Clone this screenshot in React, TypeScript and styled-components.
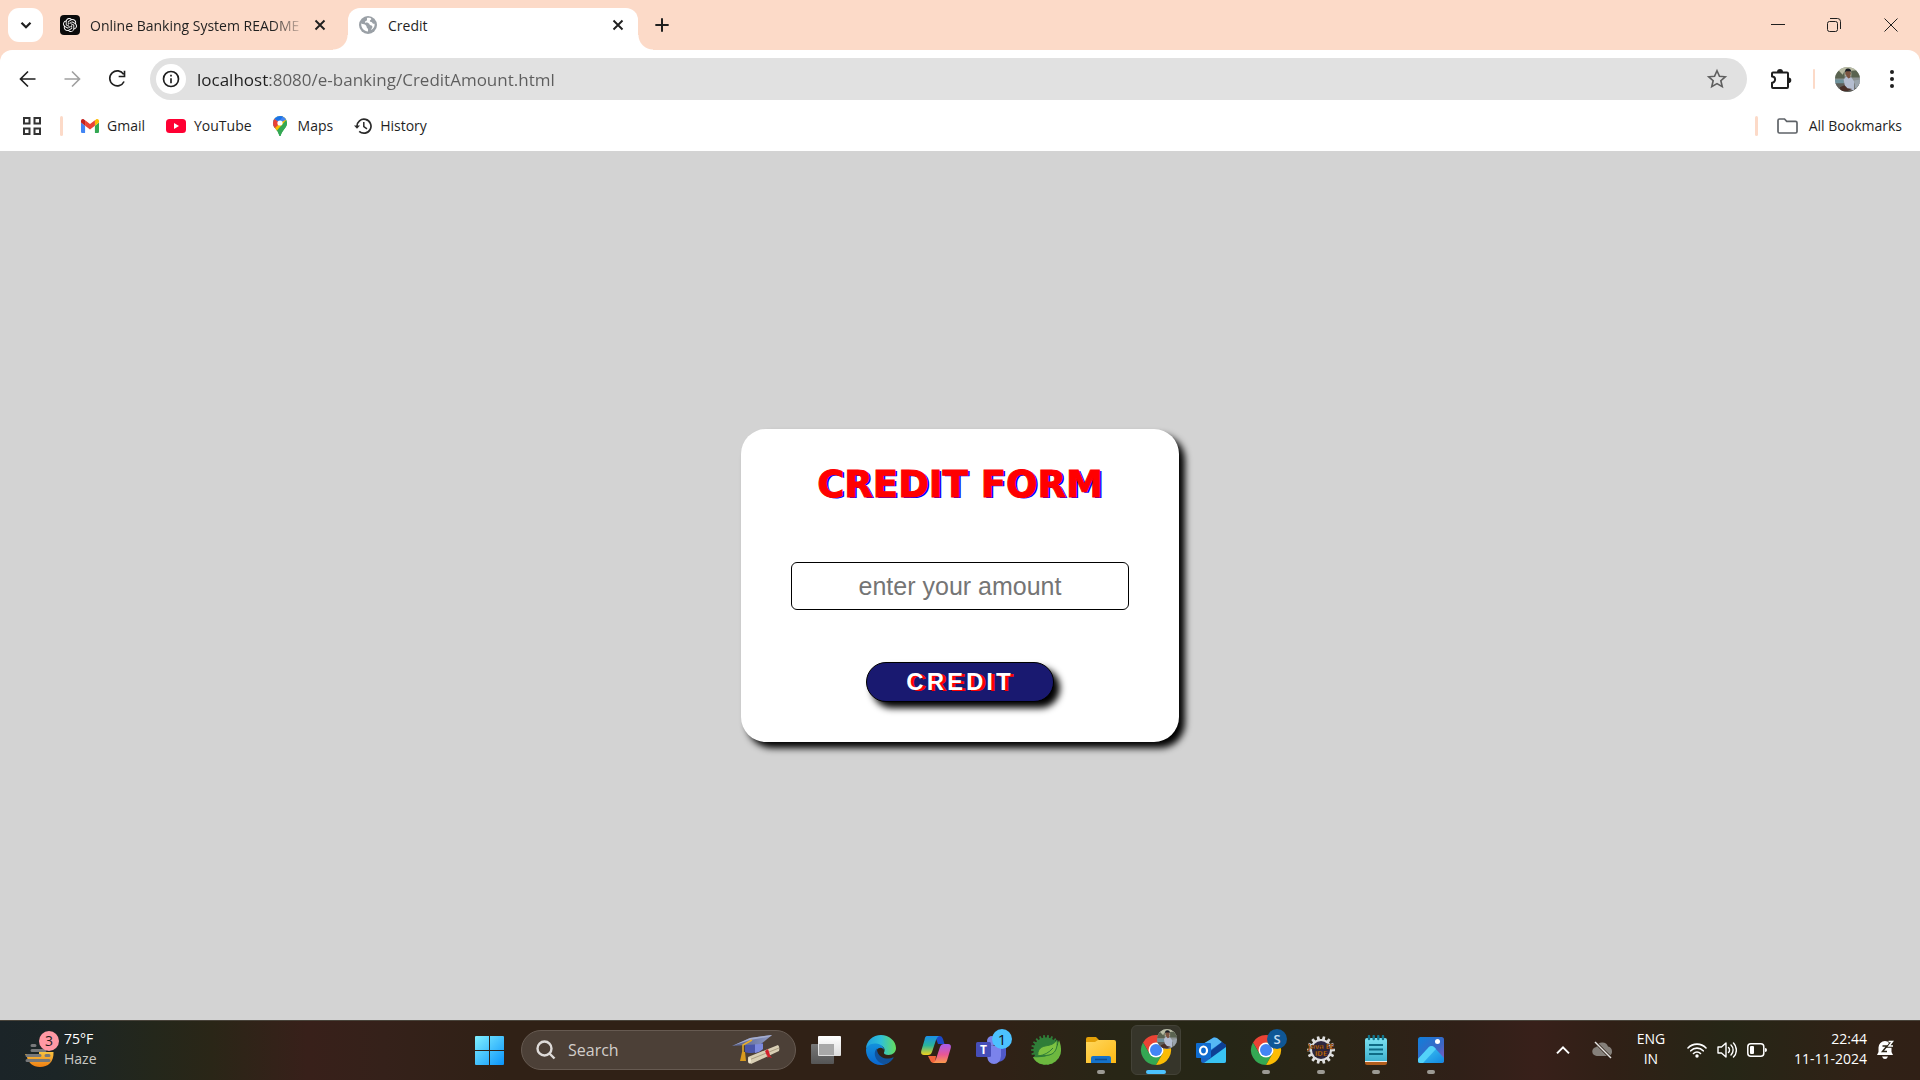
import React, { useState } from "react";
import styled, { createGlobalStyle } from "styled-components";

const ui = `"Open Sans", "Noto Sans", sans-serif`;

const GlobalStyle = createGlobalStyle`
  *, *::before, *::after { box-sizing: border-box; }
  html, body, #root { height: 100%; }
  body { margin: 0; overflow: hidden; background: #d3d3d3; font-family: ${ui}; color: #1f1f1f; }
  button, input { font-family: inherit; }
  svg { display: block; flex: none; }
`;

const Screen = styled.div`
  min-height: 100vh;
  display: flex;
  flex-direction: column;
`;

/* ---------- browser chrome ---------- */

const TabStrip = styled.header`
  height: 50px;
  display: flex;
  align-items: flex-start;
  background: #fcdac8;
  padding: 8px 0 0 8px;
`;

const PlainButton = styled.button<{ $w?: number; $h?: number; $tone?: string }>`
  width: ${(p) => p.$w ?? 28}px;
  height: ${(p) => p.$h ?? 28}px;
  display: flex;
  align-items: center;
  justify-content: center;
  flex: none;
  padding: 0;
  border: 0;
  background: none;
  color: ${(p) => p.$tone ?? "#1f1f1f"};
`;

const TabSearch = styled(PlainButton)`
  background: #fff;
  border-radius: 11px;
`;

const Tabs = styled.div`
  display: flex;
  flex: 1;
  padding-left: 5px;
`;

const Tab = styled.div<{ $active?: boolean }>`
  position: relative;
  width: ${(p) => (p.$active ? 290 : 300)}px;
  height: 42px;
  display: flex;
  align-items: flex-start;
  padding: ${(p) => (p.$active ? "0 6px 0 10px" : "0 14px 0 12px")};
  border-radius: 12px 12px 0 0;
  background: ${(p) => (p.$active ? "#fff" : "none")};

  &::before,
  &::after {
    content: "";
    display: ${(p) => (p.$active ? "block" : "none")};
    position: absolute;
    bottom: 0;
    width: 15px;
    height: 15px;
  }
  &::before { right: 100%; background: radial-gradient(circle at 0 0, transparent 14px, #fff 15px); }
  &::after { left: 100%; background: radial-gradient(circle at 100% 0, transparent 14px, #fff 15px); }
`;

const TabLabel = styled.span<{ $fade?: boolean }>`
  flex: 1;
  min-width: 0;
  overflow: hidden;
  white-space: nowrap;
  padding-left: 10px;
  line-height: 35px;
  font-size: 14px;
  ${(p) => p.$fade && "mask-image: linear-gradient(90deg, #000 calc(100% - 34px), transparent);"}
`;

const TabIcon = styled.span`
  height: 34px;
  display: flex;
  align-items: center;
`;

const TabClose = styled(PlainButton)`
  width: 28px;
  height: 34px;
`;

const WindowControls = styled.div`
  display: flex;
`;

const ToolbarBack = styled.div`
  background: #fcdac8;
`;

const Toolbar = styled.nav`
  height: 58px;
  display: flex;
  align-items: center;
  padding: 0 14px 0 6px;
  background: #fff;
  border-radius: 12px 12px 0 0;
`;

const AddressBar = styled.div`
  flex: 1;
  height: 42px;
  display: flex;
  align-items: center;
  margin: 0 16px 0 10px;
  padding: 0 16px 0 6px;
  border-radius: 21px;
  background: #e1e1e1;
`;

const SiteInfo = styled(PlainButton)`
  border-radius: 50%;
  background: #fff;
`;

const Url = styled.input`
  flex: 1;
  min-width: 0;
  height: 30px;
  padding: 0;
  margin-left: 11px;
  border: 0;
  outline: 0;
  font-size: 17px;
  color: transparent;
  background: linear-gradient(90deg, #1f1f1f 72px, #5d5d5d 72px);
  background-clip: text;
  -webkit-background-clip: text;
`;

const Divider = styled.span<{ $w: number; $margin: string }>`
  width: ${(p) => p.$w}px;
  height: 20px;
  margin: ${(p) => p.$margin};
  border-radius: 2px;
  background: #fcdac8;
`;

const MenuButton = styled(PlainButton)`
  margin-left: 18px;
`;

const Bookmarks = styled.nav`
  height: 43px;
  display: flex;
  align-items: center;
  padding: 0 18px 7px 18px;
  background: #fff;
`;

const BookmarkList = styled.div`
  flex: 1;
  display: flex;
  align-items: center;
  gap: 21px;
  padding-left: 18px;
`;

const Bookmark = styled.a<{ $gap?: number }>`
  display: flex;
  align-items: center;
  gap: ${(p) => p.$gap ?? 8}px;
  color: #1f1f1f;
  font-size: 14px;
  line-height: 20px;
  text-decoration: none;
  white-space: nowrap;
`;

/* ---------- page ---------- */

const Page = styled.main`
  flex: 1;
  display: flex;
  align-items: center;
  justify-content: center;
  background: #d3d3d3;
`;

const CreditCard = styled.form`
  display: flex;
  flex-direction: column;
  align-items: center;
  padding: 30px 50px 40px;
  border-radius: 25px;
  background: #fff;
  box-shadow: 6px 6px 7px #000;
`;

const Title = styled.h1`
  margin: 0 0 52px;
  font-family: "Arial Black", "DejaVu Sans", sans-serif;
  font-size: 37px;
  font-weight: 900;
  line-height: 51px;
  color: #f00;
  -webkit-text-stroke: 1px #f00;
  text-shadow: 2px 1px 0 #00f;
  white-space: nowrap;
`;

const Amount = styled.input`
  width: 338px;
  height: 48px;
  border: 1px solid #000;
  border-radius: 6px;
  padding: 0 10px;
  text-align: center;
  font-family: "Liberation Sans", Arial, sans-serif;
  font-size: 25px;
  color: #000;
  outline: 0;
  &::placeholder { color: #757575; }
`;

const Submit = styled.button`
  width: 188px;
  height: 40px;
  margin-top: 52px;
  border: 1px solid #000;
  border-radius: 20px;
  background: #191970;
  color: #fff;
  font-family: "Liberation Sans", Arial, sans-serif;
  font-size: 24px;
  font-weight: 700;
  letter-spacing: 3px;
  text-shadow: 3px 1px 0 #f00;
  box-shadow: 6px 6px 7px #000;
`;

/* ---------- taskbar ---------- */

const Taskbar = styled.footer`
  height: 60px;
  display: grid;
  grid-template-columns: 1fr auto 1fr;
  padding-bottom: 1px;
  border-top: 1px solid #48433a;
  color: #fff;
  background: linear-gradient(90deg, #1b2428 0, #1c2526 3%, #24271b 8%, #2a2617 11%, #38201a 16%, #35211a 20%, #302116 26%, #302116 52%, #282616 58%, #262616 64%, #2b2416 70%, #302018 76%, #38201a 80%, #302016 84%, #262616 90%, #302116 97%, #302016 100%);
`;

const Weather = styled.button`
  justify-self: start;
  display: flex;
  align-items: center;
  gap: 5px;
  padding: 0 0 0 23px;
  border: 0;
  background: none;
  color: #fff;
  text-align: left;
`;

const Stack = styled.span<{ $align?: string }>`
  display: flex;
  flex-direction: column;
  padding-bottom: 2px;
  text-align: ${(p) => p.$align ?? "left"};
  font-size: 14px;
  line-height: 20px;
  white-space: nowrap;
`;

const Muted = styled.span`
  color: #c9c9c4;
`;

const Pinned = styled.div`
  display: flex;
  align-items: center;
  gap: 5px;
`;

const AppButton = styled.button<{ $active?: boolean }>`
  width: 50px;
  height: 50px;
  padding: 0;
  position: relative;
  display: flex;
  align-items: center;
  justify-content: center;
  border-radius: 6px;
  border: 1px solid ${(p) => (p.$active ? "#434237" : "transparent")};
  background: ${(p) => (p.$active ? "#36352a" : "none")};
`;

const RunMark = styled.span<{ $active?: boolean }>`
  position: absolute;
  bottom: 0;
  width: ${(p) => (p.$active ? 20 : 8)}px;
  height: 4px;
  border-radius: 2px;
  background: ${(p) => (p.$active ? "#4cc2ff" : "#9c9a94")};
`;

const Search = styled.label`
  width: 275px;
  height: 40px;
  margin: 0 0 0 2px;
  display: flex;
  align-items: center;
  padding: 0 15px 0 14px;
  border: 1px solid #665a51;
  border-radius: 20px;
  background: #4c4037;
`;

const SearchInput = styled.input`
  flex: 1;
  min-width: 0;
  margin-left: 12px;
  padding: 0;
  border: 0;
  outline: 0;
  background: none;
  color: #fff;
  font-size: 16px;
  &::placeholder { color: #d2cecb; opacity: 1; }
`;

const Tray = styled.div`
  justify-self: end;
  display: flex;
  align-items: center;
  padding-right: 26px;
`;

const TrayButton = styled.button<{ $w?: number }>`
  min-width: ${(p) => p.$w ?? 40}px;
  height: 50px;
  display: flex;
  align-items: center;
  justify-content: center;
  gap: 10px;
  padding: 0;
  border: 0;
  background: none;
  color: #fff;
`;

const ClockButton = styled(TrayButton)`
  margin-left: 19px;
  gap: 10px;
`;

/* ---------- drawings ---------- */

const Line = ({ size, d, w = 2, box = 24 }: { size: number; d: string; w?: number; box?: number }) => (
  <svg width={size} height={size} viewBox={`0 0 ${box} ${box}`} fill="none" stroke="currentColor" strokeWidth={w} aria-hidden="true">
    <path d={d} />
  </svg>
);

const gearPath = (teeth: number, c: number, inner: number, outer: number) => {
  const pts: string[] = [];
  const step = (Math.PI * 2) / teeth;
  for (let i = 0; i < teeth; i++) {
    [[-0.3, inner], [-0.2, outer], [0.2, outer], [0.3, inner]].forEach(([o, r]) => {
      const a = (i + o) * step;
      pts.push(`${(c + r * Math.cos(a)).toFixed(2)} ${(c + r * Math.sin(a)).toFixed(2)}`);
    });
  }
  return `M${pts.join("L")}Z`;
};

const OpenAiIcon = () => (
  <svg width="20" height="20" viewBox="0 0 20 20" aria-hidden="true">
    <rect width="20" height="20" rx="4" fill="#0b0b0b" />
    <g transform="translate(3 3) scale(.583)" fill="#fff">
      <path d="M22.28 9.82a5.98 5.98 0 0 0-.52-4.91 6.05 6.05 0 0 0-6.51-2.9A6.07 6.07 0 0 0 4.98 4.18a5.98 5.98 0 0 0-4 2.9 6.05 6.05 0 0 0 .74 7.1 5.98 5.98 0 0 0 .51 4.91 6.05 6.05 0 0 0 6.52 2.9A5.98 5.98 0 0 0 13.26 24a6.06 6.06 0 0 0 5.77-4.21 5.99 5.99 0 0 0 4-2.9 6.06 6.06 0 0 0-.75-7.07zm-9.02 12.61a4.48 4.48 0 0 1-2.88-1.04l.14-.08 4.78-2.76a.79.79 0 0 0 .39-.68v-6.74l2.02 1.17.04.05v5.58a4.5 4.5 0 0 1-4.49 4.5zM3.6 18.3a4.47 4.47 0 0 1-.54-3.01l.14.08 4.79 2.76a.77.77 0 0 0 .78 0l5.84-3.37v2.33l-.03.06L9.74 19.95a4.5 4.5 0 0 1-6.14-1.65zM2.34 7.9a4.49 4.49 0 0 1 2.37-1.98v5.68c0 .28.15.54.39.68l5.81 3.35-2.02 1.17h-.07l-4.83-2.79A4.5 4.5 0 0 1 2.34 7.87zm16.6 3.86-5.84-3.39 2.02-1.16h.07l4.83 2.79a4.49 4.49 0 0 1-.68 8.1v-5.68a.79.79 0 0 0-.4-.66zm2.01-3.03-.14-.08-4.77-2.78a.78.78 0 0 0-.79 0L9.41 9.23V6.9l.03-.06 4.83-2.79a4.5 4.5 0 0 1 6.68 4.66zM8.31 12.86l-2.02-1.16-.04-.06V6.07a4.5 4.5 0 0 1 7.38-3.45l-.14.08L8.7 5.46a.79.79 0 0 0-.39.68zm1.1-2.36L12 9l2.61 1.5v3L12.01 15l-2.6-1.5z" />
    </g>
  </svg>
);

const GlobeIcon = () => (
  <svg width="20" height="20" viewBox="0 0 20 20" aria-hidden="true">
    <circle cx="10" cy="10" r="9" fill="#9aa0a6" />
    <path d="M3.2 8.6c1.7.8 4.2.8 5 2.1.7 1 .2 1.8 1.2 2.5.8.6.7 1.6.6 3.4-3.8-.2-7-3.400-6.800-8z M9.300 2.800c-1 1.300.4 1.700-.6 2.700-.8.8-2 .7-1.700 1.800.4 1 2.400.2 3.600.9 1.200.6.8 1.800 2 2.100 1.300.3 2.300.8 1.600 2.400-.3.8-.9 1.200-1.200 2.200 2.400-1.300 3.900-3 3.600-6.200-1.500.4-1.900-.3-2.500-1.200-.7-1-2.300-.2-2.300-1.500 0-1.500 1.500-1 1.500-2.100 0-.8-2.400-1.500-4-1.100z" fill="#fff" />
  </svg>
);

const GmailIcon = () => (
  <svg width="18" height="14" viewBox="52 42 88 66" preserveAspectRatio="none" aria-hidden="true">
    <path fill="#4285f4" d="M58 108h14V74L52 59v43c0 3.320 2.690 6 6 6" />
    <path fill="#34a853" d="M120 108h14c3.320 0 6-2.690 6-6V59l-20 15" />
    <path fill="#fbbc04" d="M120 48v26l20-15v-8c0-7.420-8.470-11.650-14.400-7.200" />
    <path fill="#ea4335" d="M72 74V48l24 18 24-18v26L96 92" />
    <path fill="#c5221f" d="M52 51v8l20 15V48l-5.600-4.200c-5.940-4.450-14.400-.22-14.400 7.200" />
  </svg>
);

const YouTubeIcon = () => (
  <svg width="20" height="14" viewBox="0 0 20 14" aria-hidden="true">
    <rect width="20" height="14" rx="3.500" fill="#ff0033" />
    <path d="M8 4.100v5.800L13 7z" fill="#fff" />
  </svg>
);

const MapsIcon = () => (
  <svg width="14" height="20" viewBox="0 0 14 20" aria-hidden="true">
    <defs>
      <clipPath id="pin"><path d="M7 0a7 7 0 0 1 7 7c0 3-1.600 4.500-3.400 7C9 16.200 8.400 17.200 7.700 19.400q-.7 1.200-1.400 0C5.600 17.200 5 16.200 3.400 14 1.600 11.500 0 10 0 7a7 7 0 0 1 7-7z" /></clipPath>
    </defs>
    <g clipPath="url(#pin)">
      <rect width="14" height="20" fill="#34a853" />
      <path d="M14 3 0 19V9l9-9h5z" fill="#fbbc04" />
      <path d="M14 3.500v16.500H2.500L8 12z" fill="#34a853" />
      <path d="M0 0h14v3L7 7 0 13z" fill="#4285f4" />
      <path d="M0 2 7 7 1 13H0z" fill="#ea4335" />
      <path d="M7 0h3L7 4.500 4 4.500 1.500 2.500z" fill="#1a73e8" />
    </g>
    <circle cx="7" cy="7" r="2.600" fill="#fff" />
  </svg>
);

const HistoryIcon = () => (
  <svg width="18" height="18" viewBox="0 0 18 18" fill="none" stroke="#2a2a2a" strokeWidth="1.700" aria-hidden="true">
    <path d="M3 9.500A7 7 0 1 1 5.200 14.300" />
    <path d="M9.800 5v4.600l3.200 2.200" strokeWidth="1.500" />
    <path d="M0 8.500h6L3 11.700z" fill="#2a2a2a" stroke="none" />
  </svg>
);

const AppsIcon = () => (
  <svg width="18" height="18" viewBox="0 0 18 18" fill="none" stroke="#333" strokeWidth="2" aria-hidden="true">
    <path d="M1 1h5.500v5.500H1zM11.500 1H17v5.500h-5.500zM1 11.500h5.500V17H1zM11.500 11.500H17V17h-5.500z" />
  </svg>
);

const PuzzleIcon = () => (
  <svg width="22" height="22" viewBox="0 0 22 22" aria-hidden="true">
    <path d="M3 4.500h4.500M3 4.500 Q2 4.500 2 5.500V8.500a3 3 0 0 1 0 6.200V19q0 1 1 1h14q1 0 1-1V5.500q0-1-1-1z" fill="none" stroke="#1f1f1f" strokeWidth="2" strokeLinejoin="round" />
    <path d="M7 4a3 3 0 0 1 6 0zM18.500 9.500a2.800 2.800 0 0 1 0 5.600z" fill="#1f1f1f" />
  </svg>
);

const Photo = ({ id, size }: { id: string; size: number }) => (
  <svg width={size} height={size} viewBox="0 0 26 26" aria-hidden="true">
    <clipPath id={id}><circle cx="13" cy="13" r="13" /></clipPath>
    <g clipPath={`url(#${id})`}>
      <rect width="26" height="26" fill="#8c9293" />
      <path d="M0 0h26v9H0z" fill="#b9bca4" />
      <path d="M0 6l4-2 4 4 2-4v8H0zM17 4l9-1v8h-9z" fill="#5a6350" />
      <path d="M0 13h9v5H0z" fill="#6e929c" />
      <path d="M0 17h26v9H0z" fill="#5f5f5a" />
      <path d="M9 13l3-3 5 1 3 4v9h-9z" fill="#b4bdd0" />
      <path d="M20 14l6-1v9h-5z" fill="#9aa4ac" />
      <path d="M12 6h4v5l-2 1-2-2z" fill="#7b5441" />
      <circle cx="13.500" cy="6.500" r="2.800" fill="#7b5441" />
      <path d="M10.500 6q-.5-4.500 3-4.500T17 6l-1-1.500h-4.500z" fill="#171a22" />
      <path d="M5 21l5-2 3 3 5 1-5 2H6z" fill="#493029" />
    </g>
  </svg>
);

const FolderOutline = () => (
  <svg width="21" height="16" viewBox="0 0 21 16" fill="none" stroke="#5f6368" strokeWidth="1.700" aria-hidden="true">
    <path d="M2.500 1h5l2.200 2.300h8.800q1.500 0 1.500 1.500v8.700q0 1.500-1.500 1.500h-16Q1 15 1 13.500v-11Q1 1 2.500 1z" />
  </svg>
);

const HazeIcon = () => (
  <svg width="36" height="42" viewBox="0 -2 36 42" aria-hidden="true">
    <defs><linearGradient id="sun" x2="0" y2="1"><stop stopColor="#f9c440" /><stop offset="1" stopColor="#f07f12" /></linearGradient></defs>
    <path d="M2 23h14v-2h14.500C31 31 25 36 17 36 10 36 4.500 31 4 26z" fill="url(#sun)" />
    <g stroke="#77787a" strokeWidth="3" strokeLinecap="round"><path d="M9 14.500h3M9 19.500h13M4 24.500h13M23 24.500h3M4 29.500h22" /></g>
    <circle cx="26" cy="10" r="10" fill="#ff99a4" />
    <text x="26" y="15" textAnchor="middle" fontSize="14" fill="#1d1d1d">3</text>
  </svg>
);

const StartIcon = () => (
  <svg width="29" height="29" viewBox="0 0 29 29" aria-hidden="true">
    <defs><linearGradient id="win" x2="1" y2="1" gradientUnits="userSpaceOnUse" gradientTransform="scale(29)"><stop stopColor="#80f0ff" /><stop offset="1" stopColor="#0a94fb" /></linearGradient></defs>
    <path d="M1 0h13v14H0V1q0-1 1-1zM15 0h13q1 0 1 1v13H15zM0 15h14v14H1q-1 0-1-1zM15 15h14v13q0 1-1 1H15z" fill="url(#win)" />
  </svg>
);

const MagnifierIcon = () => (
  <svg width="20" height="20" viewBox="0 0 20 20" fill="none" stroke="#dedbd9" strokeWidth="2.400" aria-hidden="true">
    <circle cx="8.500" cy="8.500" r="7" /><path d="M13.500 13.500 18.500 18.500" />
  </svg>
);

const GraduationArt = () => (
  <svg width="48" height="30" viewBox="0 0 48 30" aria-hidden="true">
    <defs>
      <linearGradient id="board" x2="1" y2="0"><stop stopColor="#525c88" /><stop offset="1" stopColor="#8f9ac4" /></linearGradient>
    </defs>
    <path d="M13 8l18 0v6c-4 4-14 5-18 3z" fill="#4a55a8" />
    <path d="M23 9h8v5q-3 3-8 4z" fill="#7c89dd" />
    <path d="M0 11 18 3 40 0 29 9z" fill="url(#board)" />
    <path d="M0 11 18 3 40 0 38 1.500 18 5z" fill="#a5adce" />
    <path d="M20 5 11 10v10" stroke="#e9ae27" strokeWidth="1.500" fill="none" />
    <path d="M10 17h3l1 9H8z" fill="#d99a1d" />
    <path d="M16 22 46 10q2 2 1 6L19 29q-3-2-3-7z" fill="#d9cfb4" />
    <path d="M17 25 47 13" stroke="#a99d81" />
    <ellipse cx="17.500" cy="25.500" rx="1.500" ry="3" fill="#f0e8cf" />
    <path d="M33 16l3-2 2 6-3 1zM37 19l3 4-3-1-2 1z" fill="#d3202a" />
  </svg>
);

const TaskViewIcon = () => (
  <svg width="30" height="28" viewBox="0 0 30 28" aria-hidden="true">
    <defs>
      <linearGradient id="tv" x2="0" y2="1"><stop stopColor="#fff" /><stop offset="1" stopColor="#dcdcdc" /></linearGradient>
      <linearGradient id="tv2" x2="0" y2="1"><stop stopColor="#777" /><stop offset="1" stopColor="#555" /></linearGradient>
    </defs>
    <rect y="8" width="23" height="20" rx="1" fill="url(#tv2)" />
    <rect x="7" width="23" height="20" rx="1" fill="url(#tv)" />
    <path d="M8 8h15v11H8z" fill="#a8a8a8" />
  </svg>
);

const EdgeIcon = () => (
  <svg width="30" height="30" viewBox="0 0 30 30" aria-hidden="true">
    <defs>
      <linearGradient id="e1" x2="1"><stop stopColor="#1f9fe0" /><stop offset=".5" stopColor="#2fc0d8" /><stop offset="1" stopColor="#65dd5c" /></linearGradient>
      <linearGradient id="e2" x2="0" y2="1"><stop stopColor="#1391dc" /><stop offset="1" stopColor="#0a66d0" /></linearGradient>
    </defs>
    <path d="M0 14C0 6 7 0 15 0s15 6 15 13c0 4-3 7-7.500 7-3 0-5-1-4.500-2.500C20 14 17 10 12 10 6 10 0 12 0 14z" fill="url(#e1)" />
    <path d="M0 15c0-4 5-7 10-6.500 5 .5 8 3 8 7 0-2-3-4-6-2-3 2.500-2 8 1 10.500s8 3 12 1C22 29 18 30 15 30 6 30 0 23 0 15z" fill="url(#e2)" />
    <path d="M11 13.500C8 16 8 21 11 25c3 3.500 7 4.500 9 4 3.500-1 6-3.500 7.500-6 .3-.6-.3-.8-.8-.5-3 1.500-8 1.500-11-.5-3-1.800-5-5-4.700-8.500z" fill="#10529c" />
  </svg>
);

const CopilotIcon = () => (
  <svg width="30" height="28" viewBox="0 0 30 28" aria-hidden="true">
    <defs>
      <linearGradient id="c1" x2="0" y2="1"><stop stopColor="#1a8fe8" /><stop offset=".5" stopColor="#2bb59a" /><stop offset="1" stopColor="#f2d21c" /></linearGradient>
      <linearGradient id="c2" x2="0" y2="1"><stop stopColor="#a55cf0" /><stop offset=".55" stopColor="#e85696" /><stop offset="1" stopColor="#fb9a4b" /></linearGradient>
    </defs>
    <path d="M14 0h5q2 0 3 3l1.500 5H17z" fill="#1c49c8" />
    <path d="M7 20h8l-1 7h-2q-2 0-3-3z" fill="#f2643c" />
    <path d="M6 0h12q-2 1-3 4l-4 12q-1 3-4 3H3q-4 0-2.500-5l3-10Q4 0 6 0z" fill="url(#c1)" />
    <path d="M24 27H12q2-1 3-4l4-12q1-3 4-3h4q4 0 2.500 5l-3 10q-1 4-2.500 4z" fill="url(#c2)" />
  </svg>
);

const TeamsIcon = () => (
  <svg width="42" height="42" viewBox="0 0 42 42" aria-hidden="true">
    <path d="M28 17h8v9q-1 6-8 7z" fill="#5059c9" />
    <circle cx="22" cy="12" r="5" fill="#7b83eb" />
    <path d="M17 17h14v10q-1 8-7 8t-7-8z" fill="#7b83eb" />
    <rect x="6" y="13" width="15" height="15" rx="1.500" fill="#464eb8" />
    <text x="13.500" y="25" textAnchor="middle" fontFamily="Open Sans" fontWeight="700" fontSize="12" fill="#fff">T</text>
    <circle cx="32" cy="10" r="10" fill="#4cc2ff" />
    <text x="32" y="15.500" textAnchor="middle" fontSize="15" fill="#111">1</text>
  </svg>
);

const SpringIcon = () => (
  <svg width="30" height="30" viewBox="0 0 30 30" aria-hidden="true">
    <path d={gearPath(22, 15, 12.500, 15)} fill="#2f7d38" />
    <path d="M28 5c3 8 3 15-2 20-6 6-15 6-20 2q-3-2-4-5 10 1 17-2 7-4 9-15z" fill="#6db83f" />
    <path d="M26 5c1 8-2 14-8 15-4 1-8 0-11 1-1-5 2-9 7-10 6-1 9-2 12-6z" fill="#7cc242" stroke="#2f7d38" />
    <path d="M7 21q9-1 15-8" stroke="#2f7d38" fill="none" />
  </svg>
);

const ExplorerIcon = () => (
  <svg width="30" height="27" viewBox="0 0 30 27" aria-hidden="true">
    <defs><linearGradient id="fo" x2="1" y2="1"><stop stopColor="#ffd75e" /><stop offset="1" stopColor="#fdb813" /></linearGradient></defs>
    <path d="M0 2q0-2 2-2h8l3 3v4H0z" fill="#e3a008" />
    <path d="M0 5h9l3-2h16q2 0 2 2v21H0z" fill="url(#fo)" />
    <path d="M5 26v-5q0-2 2-2h16q2 0 2 2v5z" fill="#1572c9" />
    <path d="M9 22.500h12" stroke="#0c4d92" strokeWidth="1.500" />
  </svg>
);

const ChromeIcon = ({ badge }: { badge: React.ReactNode }) => (
  <svg width="42" height="42" viewBox="0 0 42 42" aria-hidden="true">
    <path d="M8 13.500A15 15 0 0 1 34 13.500H21L14.500 24.700z" fill="#ea4335" />
    <path d="M8 13.500A15 15 0 0 0 21 36l6.500-11.300L21 28.500l-6.500-3.800z" fill="#34a853" />
    <path d="M34 13.500A15 15 0 0 1 21 36l6.500-11.300L28.500 19 21 13.500z" fill="#fbbc04" />
    <circle cx="21" cy="21" r="7.500" fill="#fff" /><circle cx="21" cy="21" r="6" fill="#4285f4" />
    {badge}
  </svg>
);

const OutlookIcon = () => (
  <svg width="30" height="26" viewBox="0 0 30 26" aria-hidden="true">
    <path d="M5 9 18 0l12 8v16q0 2-2 2H7q-2 0-2-2z" fill="#1763c4" />
    <path d="M5 8 17 1q2-1 4 0l5 4L9 17z" fill="#55b8f5" />
    <path d="M10 18 26 5l4 3v3L14 22z" fill="#0d3f94" />
    <path d="M30 10v14q0 2-2 2H8z" fill="#39c3f2" />
    <rect x="0" y="6" width="15" height="15" rx="1" fill="#0f6cd0" />
    <ellipse cx="7.500" cy="13.500" rx="3.500" ry="4" fill="none" stroke="#fff" strokeWidth="2.200" />
  </svg>
);

const JavaIcon = () => (
  <svg width="28" height="28" viewBox="0 0 28 28" aria-hidden="true">
    <path d={gearPath(14, 14, 11, 14)} fill="#dfdfdf" />
    <circle cx="14" cy="14" r="9" fill="#2c2740" />
    <g fontFamily="Open Sans" fontWeight="700" fontSize="7.500" textAnchor="middle" fill="#f08a1c" stroke="#30180a" strokeWidth=".4">
      <text x="14" y="13">Java EE</text><text x="14" y="20">IDE</text>
    </g>
  </svg>
);

const NotepadIcon = () => (
  <svg width="22" height="30" viewBox="0 0 22 30" aria-hidden="true">
    <defs><linearGradient id="np" x2="0" y2="1"><stop stopColor="#7be0f0" /><stop offset="1" stopColor="#3fb2cf" /></linearGradient></defs>
    <path d="M0 24h22v4q0 2-2 2H2q-2 0-2-2z" fill="#b25e1d" />
    <path d="M0 23h22v4H0z" fill="#eee" />
    <path d="M0 5q0-2 2-2h18q2 0 2 2v21H0z" fill="url(#np)" />
    <path d="M4 10h14M4 14.500h14M4 19h14" stroke="#0f6b85" strokeWidth="2" />
    <path d="M4 1v3M8.700 1v3M13.300 1v3M18 1v3" stroke="#13778f" strokeWidth="2.400" strokeLinecap="round" />
  </svg>
);

const PhotosIcon = () => (
  <svg width="26" height="26" viewBox="0 0 26 26" aria-hidden="true">
    <defs>
      <linearGradient id="ph" x2="1" y2="1"><stop stopColor="#0f7fdb" /><stop offset=".6" stopColor="#3d66c4" /><stop offset="1" stopColor="#8a5bc0" /></linearGradient>
      <linearGradient id="ph2" x2="1" y2="1"><stop stopColor="#45d0f7" /><stop offset="1" stopColor="#1286e0" /></linearGradient>
      <clipPath id="phc"><rect width="26" height="26" rx="2.500" /></clipPath>
    </defs>
    <g clipPath="url(#phc)">
      <rect width="26" height="26" fill="url(#ph)" />
      <path d="M0 22 11 10q2.500-2 5 0l10 11v5H0z" fill="url(#ph2)" />
      <path d="M0 22 11 10q2.500-2 5 0l2 2L5 26H0z" fill="#53d2f9" />
      <circle cx="19.500" cy="4.500" r="2.500" fill="#fff" />
    </g>
  </svg>
);

const CloudOffIcon = () => (
  <svg width="22" height="18" viewBox="0 0 22 18" aria-hidden="true">
    <path d="M5 15a4.500 4.500 0 0 1-.5-9A6 6 0 0 1 16 5.500 5 5 0 0 1 17 15z" fill="#85807a" />
    <path d="M3 1 19 17" stroke="#33241b" strokeWidth="3" />
    <path d="M3 1 19 17" stroke="#e8e6e4" strokeWidth="1.500" />
  </svg>
);

const WifiIcon = () => (
  <svg width="20" height="18" viewBox="0 0 20 18" fill="none" stroke="#fff" strokeWidth="1.600" strokeLinecap="round" aria-hidden="true">
    <path d="M1 7a12.300 12.300 0 0 1 18 0M3.800 9.800a8.500 8.500 0 0 1 12.400 0M6.500 12.500a4.800 4.800 0 0 1 7 0" />
    <circle cx="10" cy="15" r="1.700" fill="#fff" stroke="none" />
  </svg>
);

const VolumeIcon = () => (
  <svg width="20" height="18" viewBox="0 0 20 18" fill="none" stroke="#fff" strokeWidth="1.400" strokeLinecap="round" strokeLinejoin="round" aria-hidden="true">
    <path d="M1 6h3.500L9 2v14l-4.500-4H1zM11.500 6.500a3.500 3.500 0 0 1 0 5M14 4a7 7 0 0 1 0 10M16.500 2a10 10 0 0 1 0 14" />
  </svg>
);

const BatteryIcon = () => (
  <svg width="20" height="14" viewBox="0 0 20 14" aria-hidden="true">
    <rect x=".8" y=".8" width="16" height="12.400" rx="3" fill="none" stroke="#fff" strokeWidth="1.500" />
    <rect x="3" y="3" width="4" height="8" rx="1" fill="#fff" /><path d="M18 5q2 0 2 2t-2 2z" fill="#fff" />
  </svg>
);

const BellIcon = () => (
  <svg width="17" height="20" viewBox="0 0 17 20" aria-hidden="true">
    <path d="M0 15l1.500-3V7.500a6.500 6.500 0 0 1 13 0V12l1.500 3zM5 16.500h6q-1 2.500-3 2.500t-3-2.500z" fill="#fff" />
    <path d="M5.500 6h4.500l-4.500 5.500H10" fill="none" stroke="#2b2417" strokeWidth="1.500" />
    <path d="M11.500 1.500h4l-3.500 4.500h4" fill="none" stroke="#2b2417" strokeWidth="3.500" />
    <path d="M11.500 1.500h4l-3.500 4.500h4" fill="none" stroke="#fff" strokeWidth="1.500" />
  </svg>
);

const badgeS = (
  <g>
    <circle cx="32" cy="10" r="10" fill="#0f5796" />
    <text x="32" y="15" textAnchor="middle" fontFamily="Open Sans" fontWeight="600" fontSize="13" fill="#c7ddf0">S</text>
  </g>
);

const badgePhoto = (
  <g transform="translate(22 0)"><Photo id="task-photo" size={20} /></g>
);

type App = { name: string; icon: React.ReactNode; state?: "running" | "active" };

const apps: App[] = [
  { name: "Task View", icon: <TaskViewIcon /> },
  { name: "Edge", icon: <EdgeIcon /> },
  { name: "Copilot", icon: <CopilotIcon /> },
  { name: "Teams", icon: <TeamsIcon /> },
  { name: "Spring Tool Suite", icon: <SpringIcon /> },
  { name: "File Explorer", icon: <ExplorerIcon />, state: "running" },
  { name: "Chrome", icon: <ChromeIcon badge={badgePhoto} />, state: "active" },
  { name: "Outlook", icon: <OutlookIcon /> },
  { name: "Chrome, second profile", icon: <ChromeIcon badge={badgeS} />, state: "running" },
  { name: "Eclipse", icon: <JavaIcon />, state: "running" },
  { name: "Notepad", icon: <NotepadIcon />, state: "running" },
  { name: "Photos", icon: <PhotosIcon />, state: "running" },
];

const closePath = "M6 6 18 18M18 6 6 18";

export default function App() {
  const [url, setUrl] = useState("localhost:8080/e-banking/CreditAmount.html");
  const [amount, setAmount] = useState("");

  return (
    <Screen>
      <GlobalStyle />
      <TabStrip>
        <TabSearch $w={35} $h={34} aria-label="Search tabs"><Line size={18} d="M6 9l6 6 6-6" w={3} /></TabSearch>
        <Tabs>
          <Tab>
            <TabIcon><OpenAiIcon /></TabIcon>
            <TabLabel $fade>Online Banking System README</TabLabel>
            <TabClose aria-label="Close tab"><Line size={18} d={closePath} w={2.5} /></TabClose>
          </Tab>
          <Tab $active>
            <TabIcon><GlobeIcon /></TabIcon>
            <TabLabel>Credit</TabLabel>
            <TabClose aria-label="Close tab"><Line size={18} d={closePath} w={2.5} /></TabClose>
          </Tab>
          <PlainButton $w={48} $h={34} aria-label="New tab"><Line size={20} d="M12 4v16M4 12h16" w={2.4} /></PlainButton>
        </Tabs>
        <WindowControls>
          <PlainButton $w={56} $h={34} aria-label="Minimize"><Line size={14} box={14} w={1} d="M0 6.500h14" /></PlainButton>
          <PlainButton $w={56} $h={34} aria-label="Restore"><Line size={14} box={14} w={1} d="M2.500 3.500h6q2 0 2 2v6q0 2-2 2h-6q-2 0-2-2v-6q0-2 2-2zM3 .5h7.500q3 0 3 3V11" /></PlainButton>
          <PlainButton $w={58} $h={34} aria-label="Close"><Line size={14} box={14} w={1} d="M.5.5l13 13M13.500.5l-13 13" /></PlainButton>
        </WindowControls>
      </TabStrip>

      <ToolbarBack>
        <Toolbar aria-label="Navigation">
          <PlainButton $w={44} $h={40} aria-label="Back"><Line size={20} d="M21 12H4M12 3l-9 9 9 9" w={2} /></PlainButton>
          <PlainButton $w={44} $h={40} $tone="#a0a0a0" aria-label="Forward"><Line size={20} d="M3 12h17M12 3l9 9-9 9" w={2} /></PlainButton>
          <PlainButton $w={46} $h={40} aria-label="Reload"><Line size={20} d="M20 6.500A9 9 0 1 0 20.500 15M21 2v7h-7" w={2} /></PlainButton>
          <AddressBar>
            <SiteInfo $w={30} $h={30} aria-label="Site information"><Line size={20} d="M12 3a9 9 0 1 0 0 18 9 9 0 0 0 0-18zM12 11v6M12 7v2" w={2} /></SiteInfo>
            <Url aria-label="Address" value={url} onChange={(e) => setUrl(e.target.value)} />
            <PlainButton $tone="#5f5f5f" aria-label="Bookmark this page"><Line size={22} d="M12 3l2.700 6 6.300.6-4.800 4.300 1.500 6.400L12 17l-5.700 3.300 1.500-6.400L3 9.600 9.300 9z" w={1.8} /></PlainButton>
          </AddressBar>
          <PlainButton $w={36} $h={36} aria-label="Extensions"><PuzzleIcon /></PlainButton>
          <Divider $w={2} $margin="0 20px 0 14px" />
          <PlainButton $w={25} $h={25} aria-label="Profile"><Photo id="profile-photo" size={25} /></PlainButton>
          <MenuButton $w={28} $h={36} aria-label="Menu">
            <svg width="4" height="18" viewBox="0 0 4 18" fill="#1f1f1f"><circle cx="2" cy="2" r="2" /><circle cx="2" cy="9" r="2" /><circle cx="2" cy="16" r="2" /></svg>
          </MenuButton>
        </Toolbar>
      </ToolbarBack>

      <Bookmarks aria-label="Bookmarks">
        <PlainButton aria-label="Apps"><AppsIcon /></PlainButton>
        <Divider $w={3} $margin="0 0 0 14px" />
        <BookmarkList>
          <Bookmark href="#gmail"><GmailIcon />Gmail</Bookmark>
          <Bookmark href="#youtube"><YouTubeIcon />YouTube</Bookmark>
          <Bookmark href="#maps" $gap={11}><MapsIcon />Maps</Bookmark>
          <Bookmark href="#history"><HistoryIcon />History</Bookmark>
        </BookmarkList>
        <Divider $w={3} $margin="0 19px 0 0" />
        <Bookmark href="#all" $gap={11}><FolderOutline />All Bookmarks</Bookmark>
      </Bookmarks>

      <Page>
        <CreditCard onSubmit={(e) => e.preventDefault()}>
          <Title>CREDIT FORM</Title>
          <Amount aria-label="Amount" placeholder="enter your amount" value={amount} onChange={(e) => setAmount(e.target.value)} />
          <Submit type="submit">CREDIT</Submit>
        </CreditCard>
      </Page>

      <Taskbar>
        <Weather>
          <HazeIcon />
          <Stack><span>75°F</span><Muted>Haze</Muted></Stack>
        </Weather>
        <Pinned>
          <AppButton aria-label="Start"><StartIcon /></AppButton>
          <Search>
            <MagnifierIcon />
            <SearchInput aria-label="Search" placeholder="Search" />
            <GraduationArt />
          </Search>
          {apps.map((app) => (
            <AppButton key={app.name} aria-label={app.name} $active={app.state === "active"}>
              {app.icon}
              {app.state && <RunMark $active={app.state === "active"} />}
            </AppButton>
          ))}
        </Pinned>
        <Tray>
          <TrayButton aria-label="Hidden icons"><Line size={16} d="M3 17l9-9 9 9" w={3} /></TrayButton>
          <TrayButton aria-label="OneDrive"><CloudOffIcon /></TrayButton>
          <TrayButton $w={56}><Stack $align="center"><span>ENG</span><span>IN</span></Stack></TrayButton>
          <TrayButton $w={96} aria-label="Network, volume, battery"><WifiIcon /><VolumeIcon /><BatteryIcon /></TrayButton>
          <ClockButton>
            <Stack $align="right"><span>22:44</span><span>11-11-2024</span></Stack>
            <BellIcon />
          </ClockButton>
        </Tray>
      </Taskbar>
    </Screen>
  );
}
